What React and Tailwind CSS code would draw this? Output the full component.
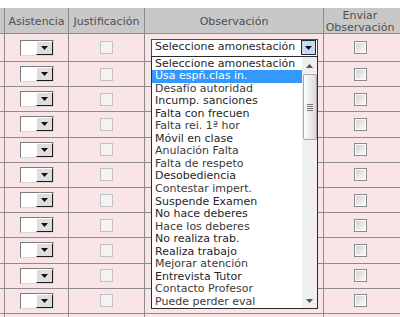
import React from 'react';

const options = [
  { label: 'Seleccione amonestación', tone: 'dark' },
  { label: 'Usa espñ.clas in.', tone: 'selected' },
  { label: 'Desafío autoridad', tone: 'light' },
  { label: 'Incump. sanciones', tone: 'dark' },
  { label: 'Falta con frecuen', tone: 'dark' },
  { label: 'Falta rei. 1ª hor', tone: 'light' },
  { label: 'Móvil en clase', tone: 'dark' },
  { label: 'Anulación Falta', tone: 'light' },
  { label: 'Falta de respeto', tone: 'light' },
  { label: 'Desobediencia', tone: 'dark' },
  { label: 'Contestar impert.', tone: 'light' },
  { label: 'Suspende Examen', tone: 'dark' },
  { label: 'No hace deberes', tone: 'dark' },
  { label: 'Hace los deberes', tone: 'light' },
  { label: 'No realiza trab.', tone: 'dark' },
  { label: 'Realiza trabajo', tone: 'dark' },
  { label: 'Mejorar atención', tone: 'light' },
  { label: 'Entrevista Tutor', tone: 'dark' },
  { label: 'Contacto Profesor', tone: 'light' },
  { label: 'Puede perder eval', tone: 'light' },
];

const rows = Array.from({ length: 12 }, (_, i) => i);

function TinyArrow({ className = '' }) {
  return (
    <svg width="7" height="4" viewBox="0 0 7 4" className={className}>
      <polygon points="0,0 7,0 3.5,4" fill="#111" />
    </svg>
  );
}

function SmallSelect() {
  return (
    <div className="flex h-[16px] w-[34px] border-t border-l border-t-[#7b7b7b] border-l-[#7b7b7b] border-b border-r border-b-[#d8d8d8] border-r-[#d8d8d8] bg-white">
      <div className="flex-1 bg-white" />
      <div className="flex w-[17px] items-end justify-center border-t border-l border-t-white border-l-white border-r border-b border-r-[#1c1c1c] border-b-[#1c1c1c] bg-[#dedede] pb-[4px]">
        <TinyArrow />
      </div>
    </div>
  );
}

function GreyCheckbox() {
  return <div className="h-[13px] w-[13px] border border-[#c2c2c2] bg-[#f3f3f3]" />;
}

function SendCheckbox() {
  return (
    <div className="h-[13px] w-[13px] border border-[#8a8a8a] bg-white p-[1px]">
      <div className="h-full w-full bg-gradient-to-br from-[#d2d2d2] to-[#fbfbfb]" />
    </div>
  );
}

export default function App() {
  return (
    <div
      className="relative h-[317px] w-[400px] overflow-hidden bg-white pt-[8px] text-[11px]"
      style={{ fontFamily: '"DejaVu Sans", Verdana, sans-serif' }}
    >
      {/* Header */}
      <div className="flex h-[26px] w-[480px] border-b border-[#8c8c8c] bg-[#c8c8c8] text-[#4f4f4f]">
        <div className="w-[5px] border-r border-[#8c8c8c]" />
        <div className="flex w-[64px] items-center justify-center border-r border-[#8c8c8c] pt-[4px]">Asistencia</div>
        <div className="flex w-[76px] items-center justify-center border-r border-[#8c8c8c] pt-[4px]">Justificación</div>
        <div className="flex w-[179px] items-center justify-center border-r border-[#8c8c8c] pt-[4px]">Observación</div>
        <div className="flex w-[72px] flex-col items-center justify-center pt-[3px] leading-[12px]">
          <span>Enviar</span>
          <span>Observación</span>
        </div>
      </div>

      {/* Rows */}
      {rows.map((r) => (
        <div
          key={r}
          className={`flex w-[480px] border-b border-[#8c8c8c] bg-[#f9e5e5] ${r === 0 ? 'h-[28px]' : 'h-[25.2px]'}`}
        >
          <div className="w-[5px] border-r border-[#8c8c8c]" />
          <div className="flex w-[64px] items-center justify-center border-r border-[#8c8c8c]">
            <SmallSelect />
          </div>
          <div className="flex w-[76px] items-center justify-center border-r border-[#8c8c8c]">
            <GreyCheckbox />
          </div>
          <div className="flex w-[179px] items-center border-r border-[#8c8c8c] pl-[6px]">
            {r === 0 && (
              <div className="flex h-[18px] w-[167px] items-center border border-[#4a4a4a] bg-white">
                <span className="flex-1 pl-[3px] text-[#2a2a2a]">Seleccione amonestación</span>
                <div className="mr-[1px] flex h-[15px] w-[15px] items-center justify-center border border-[#1d2a44] bg-[#c9dbf0]">
                  <TinyArrow />
                </div>
              </div>
            )}
          </div>
          <div className="flex w-[72px] items-center justify-center">
            <SendCheckbox />
          </div>
        </div>
      ))}

      {/* Open dropdown list */}
      <div className="absolute left-[151px] top-[56px] flex h-[253px] w-[167px] border border-[#2b2b2b] bg-white">
        <div className="flex-1 pt-[0.5px]">
          {options.map((o) => (
            <div
              key={o.label}
              className={`flex h-[12.55px] items-center whitespace-nowrap pl-[3px] ${
                o.tone === 'selected'
                  ? 'bg-[#3399ff] text-white'
                  : o.tone === 'light'
                  ? 'text-[#3d3a36]'
                  : 'text-[#262626]'
              }`}
            >
              {o.label}
            </div>
          ))}
        </div>
        {/* Scrollbar */}
        <div className="flex w-[15px] flex-col items-center bg-[#efefef]">
          <div className="flex h-[17px] w-full items-center justify-center">
            <svg width="7" height="4" viewBox="0 0 7 4">
              <polygon points="0,4 7,4 3.5,0" fill="#555" />
            </svg>
          </div>
          <div className="flex h-[66px] w-[14px] flex-col items-center justify-center gap-[1px] rounded-[2px] border border-[#a9a9a9] bg-gradient-to-r from-[#fdfdfd] to-[#d9d9d9]">
            <div className="h-[1px] w-[6px] bg-[#777]" />
            <div className="h-[1px] w-[6px] bg-[#777]" />
            <div className="h-[1px] w-[6px] bg-[#777]" />
            <div className="h-[1px] w-[6px] bg-[#777]" />
          </div>
          <div className="flex-1" />
          <div className="flex h-[14px] w-full items-center justify-center">
            <svg width="7" height="4" viewBox="0 0 7 4">
              <polygon points="0,0 7,0 3.5,4" fill="#555" />
            </svg>
          </div>
        </div>
      </div>
    </div>
  );
}
